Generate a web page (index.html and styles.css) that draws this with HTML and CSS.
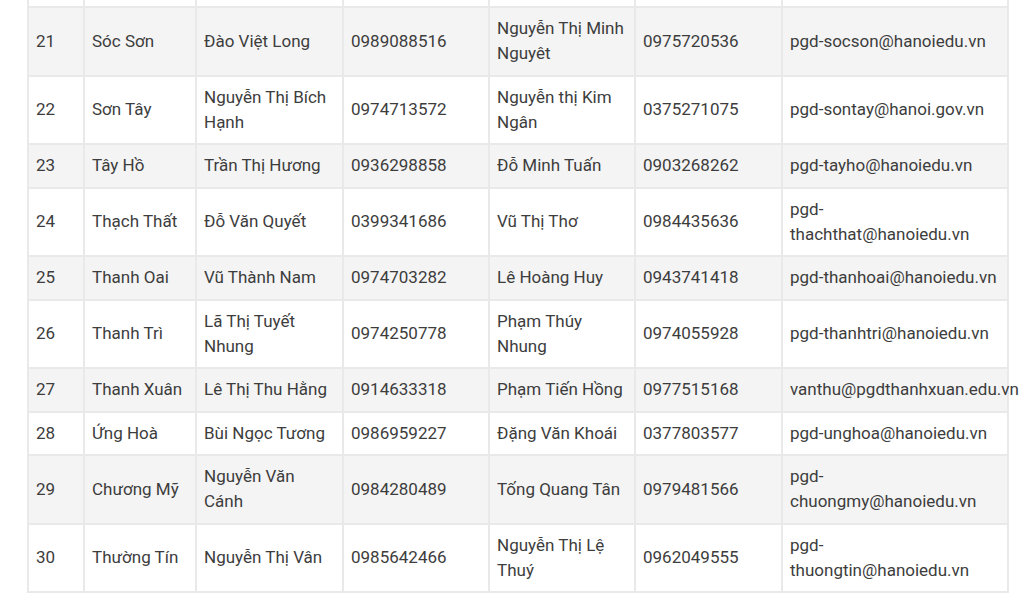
FILE: index.html
```html
<!DOCTYPE html>
<html lang="vi">
<head>
<meta charset="utf-8">
<title>Danh sách phòng GD&amp;ĐT</title>
<link rel="stylesheet" href="styles.css">
</head>
<body>
<table class="list">
  <colgroup>
    <col class="c-no"><col class="c-area"><col class="c-name"><col class="c-phone"><col class="c-name2"><col class="c-phone2"><col class="c-mail">
  </colgroup>
  <tbody>
    <tr class="cut"><td></td><td></td><td></td><td></td><td></td><td></td><td></td></tr>
    <tr class="alt"><td>21</td><td>Sóc Sơn</td><td>Đào Việt Long</td><td>0989088516</td><td>Nguyễn Thị Minh Nguyêt</td><td>0975720536</td><td>pgd-socson@hanoiedu.vn</td></tr>
    <tr><td>22</td><td>Sơn Tây</td><td>Nguyễn Thị Bích Hạnh</td><td>0974713572</td><td>Nguyễn thị Kim Ngân</td><td>0375271075</td><td>pgd-sontay@hanoi.gov.vn</td></tr>
    <tr class="alt"><td>23</td><td>Tây Hồ</td><td>Trần Thị Hương</td><td>0936298858</td><td>Đỗ Minh Tuấn</td><td>0903268262</td><td>pgd-tayho@hanoiedu.vn</td></tr>
    <tr><td>24</td><td>Thạch Thất</td><td>Đỗ Văn Quyết</td><td>0399341686</td><td>Vũ Thị Thơ</td><td>0984435636</td><td>pgd-<br>thachthat@hanoiedu.vn</td></tr>
    <tr class="alt"><td>25</td><td>Thanh Oai</td><td>Vũ Thành Nam</td><td>0974703282</td><td>Lê Hoàng Huy</td><td>0943741418</td><td class="nowrap">pgd-thanhoai@hanoiedu.vn</td></tr>
    <tr><td>26</td><td>Thanh Trì</td><td>Lã Thị Tuyết Nhung</td><td>0974250778</td><td>Phạm Thúy Nhung</td><td>0974055928</td><td class="nowrap">pgd-thanhtri@hanoiedu.vn</td></tr>
    <tr class="alt"><td>27</td><td>Thanh Xuân</td><td>Lê Thị Thu Hằng</td><td>0914633318</td><td>Phạm Tiến Hồng</td><td>0977515168</td><td class="nowrap">vanthu@pgdthanhxuan.edu.vn</td></tr>
    <tr><td>28</td><td>Ứng Hoà</td><td>Bùi Ngọc Tương</td><td>0986959227</td><td>Đặng Văn Khoái</td><td>0377803577</td><td class="nowrap">pgd-unghoa@hanoiedu.vn</td></tr>
    <tr class="alt"><td>29</td><td>Chương Mỹ</td><td>Nguyễn Văn Cánh</td><td>0984280489</td><td>Tống Quang Tân</td><td>0979481566</td><td>pgd-<br>chuongmy@hanoiedu.vn</td></tr>
    <tr><td>30</td><td>Thường Tín</td><td>Nguyễn Thị Vân</td><td>0985642466</td><td>Nguyễn Thị Lệ Thuý</td><td>0962049555</td><td>pgd-<br>thuongtin@hanoiedu.vn</td></tr>
  </tbody>
</table>
</body>
</html>
```
FILE: styles.css
```css
html, body {
  margin: 0;
  padding: 0;
  background: #ffffff;
}

body {
  font-family: Roboto, "Noto Sans", "Liberation Sans", sans-serif;
  font-size: 17px;
  color: #3d3d3d;
}

.list {
  margin-left: 27px;
  width: 980px;
  table-layout: fixed;
  border-collapse: collapse;
}

.c-no { width: 56px; }
.c-area { width: 112px; }
.c-name { width: 147px; }
.c-phone { width: 146px; }
.c-name2 { width: 146px; }
.c-phone2 { width: 147px; }
.c-mail { width: 226px; }

.list td {
  border: 2px solid #e9e9e9;
  padding: 8.25px 7px 8.25px 7px;
  line-height: 25px;
  vertical-align: middle;
  text-align: left;
}

.list tr.alt td {
  background: #f4f4f4;
}

.list tr.cut td {
  border-top: none;
  padding: 0;
  height: 6px;
  line-height: 0;
}

.nowrap {
  white-space: nowrap;
}
```
